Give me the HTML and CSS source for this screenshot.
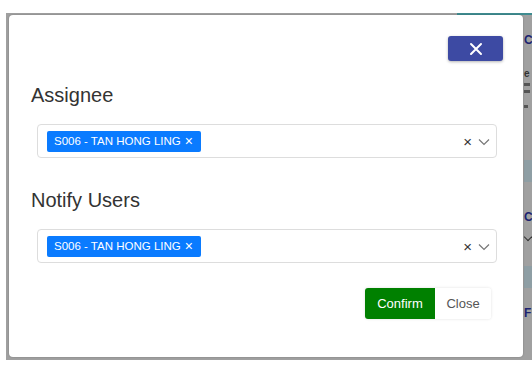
FILE: index.html
```html
<!DOCTYPE html>
<html lang="en">
<head>
    <meta charset="UTF-8">
    <meta name="viewport" content="width=device-width, initial-scale=1.0">
    <title>Assign Task</title>
    <link rel="stylesheet" href="styles.css">
</head>
<body>
    <div class="backdrop">
        <div class="behind-bar"></div>
        <div class="behind">
            <div class="behind-title">C</div>
            <div class="behind-text">e</div>
            <div class="behind-line"></div>
            <div class="behind-line"></div>
            <div class="behind-line short"></div>
            <div class="behind-band"></div>
            <div class="behind-title second">C</div>
            <div class="behind-chevron"></div>
            <div class="behind-band lower"></div>
            <div class="behind-title third">F</div>
        </div>

        <div class="modal" role="dialog">
            <div class="modal-header">
                <button class="close-x" aria-label="Close">
                    <svg width="14" height="14" viewBox="0 0 14 14">
                        <path d="M2 2 L12 12 M12 2 L2 12" stroke="#fff" stroke-width="2" stroke-linecap="round"/>
                    </svg>
                </button>
            </div>

            <div class="field">
                <label class="field-label">Assignee</label>
                <div class="select">
                    <div class="select-values">
                        <span class="chip">S006 - TAN HONG LING <span class="chip-remove">&times;</span></span>
                    </div>
                    <div class="select-indicators">
                        <span class="clear">&times;</span>
                        <svg class="chevron" width="12" height="8" viewBox="0 0 12 8">
                            <path d="M1 1.5 L6 6.5 L11 1.5" fill="none" stroke="#777" stroke-width="1.2"/>
                        </svg>
                    </div>
                </div>
            </div>

            <div class="field">
                <label class="field-label">Notify Users</label>
                <div class="select">
                    <div class="select-values">
                        <span class="chip">S006 - TAN HONG LING <span class="chip-remove">&times;</span></span>
                    </div>
                    <div class="select-indicators">
                        <span class="clear">&times;</span>
                        <svg class="chevron" width="12" height="8" viewBox="0 0 12 8">
                            <path d="M1 1.5 L6 6.5 L11 1.5" fill="none" stroke="#777" stroke-width="1.2"/>
                        </svg>
                    </div>
                </div>
            </div>

            <div class="modal-footer">
                <div class="btn-group">
                    <button class="btn btn-confirm">Confirm</button>
                    <button class="btn btn-close">Close</button>
                </div>
            </div>
        </div>
    </div>
</body>
</html>
```

FILE: styles.css
```css
* {
    margin: 0;
    padding: 0;
    box-sizing: border-box;
}

body {
    font-family: "Liberation Sans", Arial, sans-serif;
    background: #fff;
    color: #333;
}

.backdrop {
    position: relative;
    margin: 13px 0 0 6px;
    height: 347px;
    background: #a0a0a0;
    overflow: hidden;
}

/* page content showing through at the right edge */
.behind-bar {
    height: 2px;
    margin-left: 451px;
    background: #3f8c90;
}

.behind {
    margin-left: 518px;
    color: #1c2370;
}

.behind-title {
    font-size: 12px;
    font-weight: bold;
    line-height: 14px;
    margin-top: 18px;
}

.behind-title.second {
    margin-top: 28px;
}

.behind-title.third {
    margin-top: 18px;
}

.behind-text {
    font-size: 10px;
    line-height: 10px;
    margin-top: 22px;
    color: #333;
    font-weight: bold;
}

.behind-line {
    height: 3px;
    width: 6px;
    margin-top: 4px;
    background: #555;
}

.behind-line.short {
    width: 4px;
    margin-top: 12px;
}

.behind-band {
    height: 22px;
    margin-top: 52px;
    background: #8e9ea4;
}

.behind-band.lower {
    margin-top: 26px;
}

.behind-chevron {
    width: 6px;
    height: 6px;
    margin: 10px 0 0 1px;
    border-right: 1px solid #333;
    border-bottom: 1px solid #333;
    transform: rotate(45deg);
}

.modal {
    position: absolute;
    left: 3px;
    top: 2px;
    width: 514px;
    height: 342px;
    background: #fff;
    border-radius: 4px;
    box-shadow: 0 0 2px rgba(0, 0, 0, 0.25);
    padding: 21px 20px 0 22px;
}

.modal-header {
    display: flex;
    justify-content: flex-end;
}

.close-x {
    width: 55px;
    height: 25px;
    border: none;
    border-radius: 3px;
    background: #3d4aa3;
    box-shadow: 0 1px 3px rgba(0, 0, 0, 0.3);
    display: flex;
    align-items: center;
    justify-content: center;
    cursor: pointer;
}

.field {
    margin-top: 22px;
}

.field + .field {
    margin-top: 30px;
}

.field-label {
    display: block;
    font-size: 20px;
    line-height: 24px;
    color: #333;
}

.select {
    margin: 17px 6px 0 6px;
    height: 34px;
    border: 1px solid #ddd;
    border-radius: 4px;
    display: flex;
    align-items: center;
    padding: 0 6px 0 9px;
}

.select-values {
    flex: 1;
    display: flex;
}

.chip {
    display: inline-flex;
    align-items: center;
    height: 21px;
    padding: 0 8px 0 7px;
    background: #0a7bff;
    color: #fff;
    font-size: 11.5px;
    border-radius: 2px;
}

.chip-remove {
    margin-left: 4px;
    font-size: 14px;
    line-height: 1;
}

.select-indicators {
    display: flex;
    align-items: center;
    gap: 6px;
}

.clear {
    font-size: 15px;
    color: #333;
    line-height: 1;
}

.chevron {
    margin-top: 2px;
}

.modal-footer {
    display: flex;
    justify-content: flex-end;
    margin: 25px 12px 0 0;
}

.btn-group {
    display: flex;
    border-radius: 3px;
    box-shadow: 0 0 3px rgba(0, 0, 0, 0.12);
}

.btn {
    height: 31px;
    border: none;
    font-family: inherit;
    font-size: 13px;
    cursor: pointer;
}

.btn-confirm {
    width: 70px;
    background: #008000;
    color: #fff;
    border-radius: 3px 0 0 3px;
}

.btn-close {
    width: 56px;
    background: #fff;
    color: #555;
    border-radius: 0 3px 3px 0;
}
```
